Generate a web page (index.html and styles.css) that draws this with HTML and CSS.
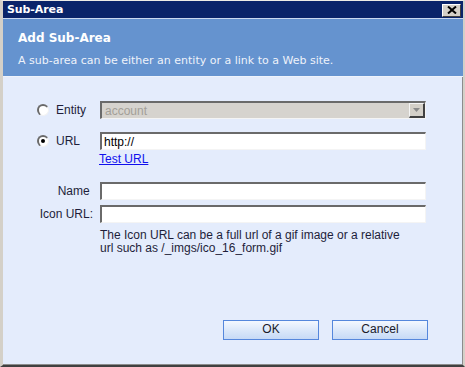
FILE: index.html
```html
<!doctype html>
<html lang="en">
<head>
  <meta charset="utf-8">
  <title>Sub-Area</title>
  <link rel="stylesheet" href="styles.css">
</head>
<body>
  <div class="dialog">
    <div class="titlebar">
      <span class="title">Sub-Area</span>
      <span class="close">
        <svg width="10" height="8" viewBox="0 0 10 8"><path d="M1 0.5 L9 7.5 M9 0.5 L1 7.5" stroke="#000" stroke-width="2"/></svg>
      </span>
    </div>
    <div class="header">
      <h1>Add Sub-Area</h1>
      <p>A sub-area can be either an entity or a link to a Web site.</p>
    </div>
    <div class="content">
      <div class="form">
        <div class="row">
          <label class="choice"><span class="radio"></span>Entity</label>
          <div class="select">
            <span class="select-text">account</span>
            <span class="select-btn">
              <svg width="7" height="4" viewBox="0 0 7 4"><path d="M0 0 H7 L3.5 4 Z" fill="#8a8a8a"/></svg>
            </span>
          </div>
        </div>
        <div class="row row-url">
          <label class="choice"><span class="radio checked"></span>URL</label>
          <input class="field" type="text" value="http://">
        </div>
        <div class="row">
          <span class="cell"></span>
          <a class="test-link" href="#">Test URL</a>
        </div>
        <div class="row row-name">
          <label class="label">Name&nbsp;</label>
          <input class="field" type="text">
        </div>
        <div class="row row-icon">
          <label class="label">Icon URL:</label>
          <input class="field" type="text">
        </div>
        <div class="row">
          <span class="cell"></span>
          <p class="help">The Icon URL can be a full url of a gif image or a relative url such as /_imgs/ico_16_form.gif</p>
        </div>
      </div>
      <div class="buttons">
        <button class="btn">OK</button>
        <button class="btn">Cancel</button>
      </div>
    </div>
  </div>
</body>
</html>
```

FILE: styles.css
```css
html, body {
  margin: 0;
  padding: 0;
  height: 100%;
  background: #d4d0c8;
}

.dialog {
  box-sizing: border-box;
  height: 367px;
  display: flex;
  flex-direction: column;
  border-style: solid;
  border-width: 1px 2px 2px 3px;
  border-color: #eeece6 #d4d0c8 #404040 #d4d0c8;
  font-family: "Liberation Sans", Arial, sans-serif;
}

.titlebar {
  height: 17px;
  background: #0a246a;
  display: flex;
  align-items: center;
  justify-content: space-between;
  padding: 0 2px 0 4px;
  border-bottom: 1px solid #c9d8f0;
}

.title {
  color: #fff;
  font-family: "DejaVu Sans", sans-serif;
  font-weight: bold;
  font-size: 11px;
  letter-spacing: -0.1px;
}

.close {
  box-sizing: border-box;
  width: 19px;
  height: 13px;
  background: #d4d0c8;
  border-style: solid;
  border-width: 1px;
  border-color: #fff #404040 #404040 #fff;
  display: flex;
  align-items: center;
  justify-content: center;
  margin-top: 1px;
}

.header {
  height: 57px;
  background: #6593cf;
  border-bottom: 1px solid #eef3fc;
  padding: 0 0 0 15px;
  font-family: "DejaVu Sans", sans-serif;
  color: #fff;
}

.header h1 {
  margin: 12px 0 0;
  font-size: 12px;
  line-height: 14px;
}

.header p {
  margin: 9px 0 0;
  font-size: 11px;
  line-height: 13px;
  color: #eef2fa;
}

.content {
  flex: 1;
  display: flex;
  flex-direction: column;
  justify-content: space-between;
  background: #e4ecfc;
  border-right: 1px solid #8c8c8c;
  border-bottom: 1px solid #8c8c8c;
  padding: 24px 34px 24px 0;
  color: #1e1e3a;
  font-size: 12px;
}

.form {
  display: flex;
  flex-direction: column;
}

.row {
  display: flex;
  align-items: center;
}

.row-url {
  margin-top: 13px;
  margin-bottom: 2px;
}

.row-name {
  margin-top: 16px;
}

.row-icon {
  margin-top: 5px;
  margin-bottom: 6px;
}

.row-icon + .row {
  align-items: flex-start;
}

.cell,
.choice,
.label {
  flex: none;
  width: 97px;
  box-sizing: border-box;
}

.choice {
  display: flex;
  align-items: center;
  padding-left: 34px;
}

.label {
  text-align: right;
  padding-right: 7px;
}

.radio {
  box-sizing: border-box;
  width: 12px;
  height: 12px;
  border-radius: 50%;
  background: #fff;
  border-style: solid;
  border-width: 2px 1px 1px 2px;
  border-color: #6a6a6a #f2f2f2 #f2f2f2 #6a6a6a;
  margin-right: 7px;
  position: relative;
}

.radio.checked::after {
  content: "";
  position: absolute;
  left: 2px;
  top: 2px;
  width: 4px;
  height: 4px;
  border-radius: 50%;
  background: #000;
}

.select,
.field {
  box-sizing: border-box;
  width: 326px;
  height: 18px;
  border-style: solid;
  border-width: 2px 1px 1px 2px;
  border-color: #6a6a6a #f4f4f4 #f4f4f4 #6a6a6a;
}

.select {
  background: #d6d3ce;
  display: flex;
  align-items: center;
  justify-content: space-between;
}

.select-text {
  color: #a39f98;
  padding-left: 3px;
  font-size: 12px;
}

.select-btn {
  box-sizing: border-box;
  width: 16px;
  height: 15px;
  background: #d4d0c8;
  border-style: solid;
  border-width: 1px 2px 2px 1px;
  border-color: #f4f4f4 #404040 #404040 #f4f4f4;
  display: flex;
  align-items: center;
  justify-content: center;
}

.field {
  background: #fff;
  font-family: "Liberation Sans", Arial, sans-serif;
  font-size: 12px;
  color: #000;
  padding: 0 2px;
  margin: 0;
  outline: none;
}

.test-link {
  color: #1010ee;
  line-height: 14px;
  margin-left: -1px;
}

.help {
  margin: 0;
  width: 312px;
  line-height: 13px;
  color: #1e1e3a;
}

.buttons {
  display: flex;
  justify-content: flex-end;
  gap: 13px;
}

.btn {
  box-sizing: border-box;
  width: 96px;
  height: 20px;
  border: 1px solid #5587dc;
  border-radius: 0;
  background: linear-gradient(#f4f8ff, #dce8fa 50%, #c6daf6);
  font-family: "Liberation Sans", Arial, sans-serif;
  font-size: 12px;
  color: #1a1a2a;
  padding: 0 0 2px;
}
```
